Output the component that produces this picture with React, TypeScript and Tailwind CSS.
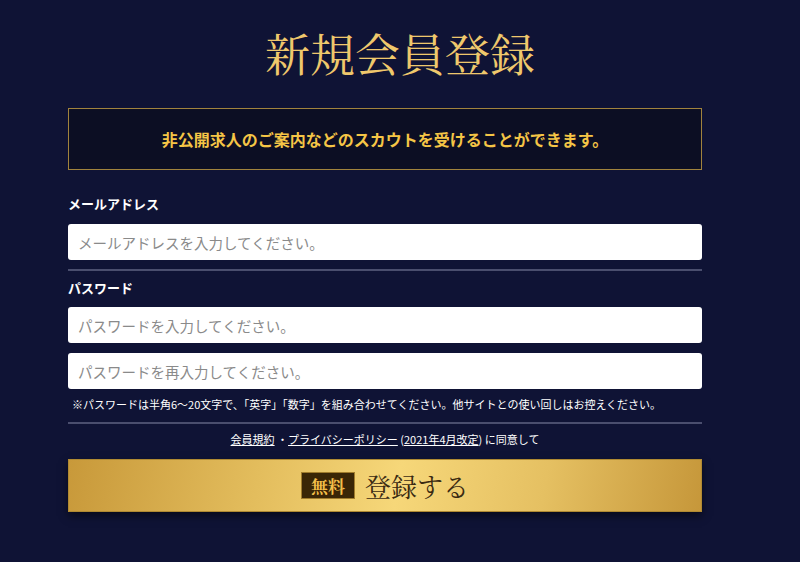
import React from "react";

const sans = "font-['Noto_Sans_CJK_JP','Noto_Sans',sans-serif]";
const serif = "font-['Noto_Serif_CJK_JP','Liberation_Serif','Noto_Sans_CJK_JP',serif]";

export default function App() {
  return (
    <div className={`min-h-[562px] w-full bg-[#0f1335] ${sans}`}>
      <div className="pt-[28px]">
        <h1 className={`text-center text-[45px] leading-[50px] text-[#efc86c] ${serif}`}>新規会員登録</h1>
      </div>
      <div className="ml-[68px] w-[634px]">
        <div className="mt-[30px] flex h-[62px] items-center justify-center border border-[#a1833d] bg-[#0c0e23]">
          <p className="text-[16px] font-bold text-[#f5c546]">非公開求人のご案内などのスカウトを受けることができます。</p>
        </div>
        <div className="mt-[24px] text-[13px] font-bold leading-[20px] text-white">メールアドレス</div>
        <input
          className="mt-[10px] block h-[36px] w-full rounded-[3px] bg-white px-[10px] text-[14.5px] text-gray-800 placeholder:text-[#8a8a8a] outline-none"
          placeholder="メールアドレスを入力してください。"
        />
        <div className="mt-[9px] h-[2px] bg-[#4a4e6e]" />
        <div className="mt-[7px] text-[13px] font-bold leading-[20px] text-white">パスワード</div>
        <input
          className="mt-[9px] block h-[36px] w-full rounded-[3px] bg-white px-[10px] text-[14.5px] text-gray-800 placeholder:text-[#8a8a8a] outline-none"
          placeholder="パスワードを入力してください。"
        />
        <input
          className="mt-[10px] block h-[36px] w-full rounded-[3px] bg-white px-[10px] text-[14.5px] text-gray-800 placeholder:text-[#8a8a8a] outline-none"
          placeholder="パスワードを再入力してください。"
        />
        <p className="mt-[7px] pl-[4px] text-[11px] leading-[16px] text-white">
          ※パスワードは半角6～20文字で、「英字」「数字」を組み合わせてください。他サイトとの使い回しはお控えください。
        </p>
        <div className="mt-[10px] h-[2px] bg-[#4a4e6e]" />
        <p className="mt-[7px] text-center text-[11px] leading-[16px] text-white">
          <span className="underline">会員規約</span> ・<span className="underline">プライバシーポリシー</span> (<span className="underline">2021年4月改定</span>) に同意して
        </p>
        <button className="mt-[12px] flex h-[53px] w-full items-center justify-center gap-[10px] border border-[#b08a32] bg-[linear-gradient(100deg,#c8993a_0%,#e3bd5d_30%,#f6d779_52%,#e5c062_75%,#c6973a_100%)] shadow-[0_4px_8px_rgba(0,0,0,0.5)]">
          <span className={`flex h-[27px] items-center border border-[#a07c2c] bg-[#3a2606] px-[9px] text-[17px] font-bold text-[#f3bf4a] ${serif}`}>無料</span>
          <span className={`text-[26px] leading-none text-[#3a2a12] ${serif}`}>登録する</span>
        </button>
      </div>
    </div>
  );
}
